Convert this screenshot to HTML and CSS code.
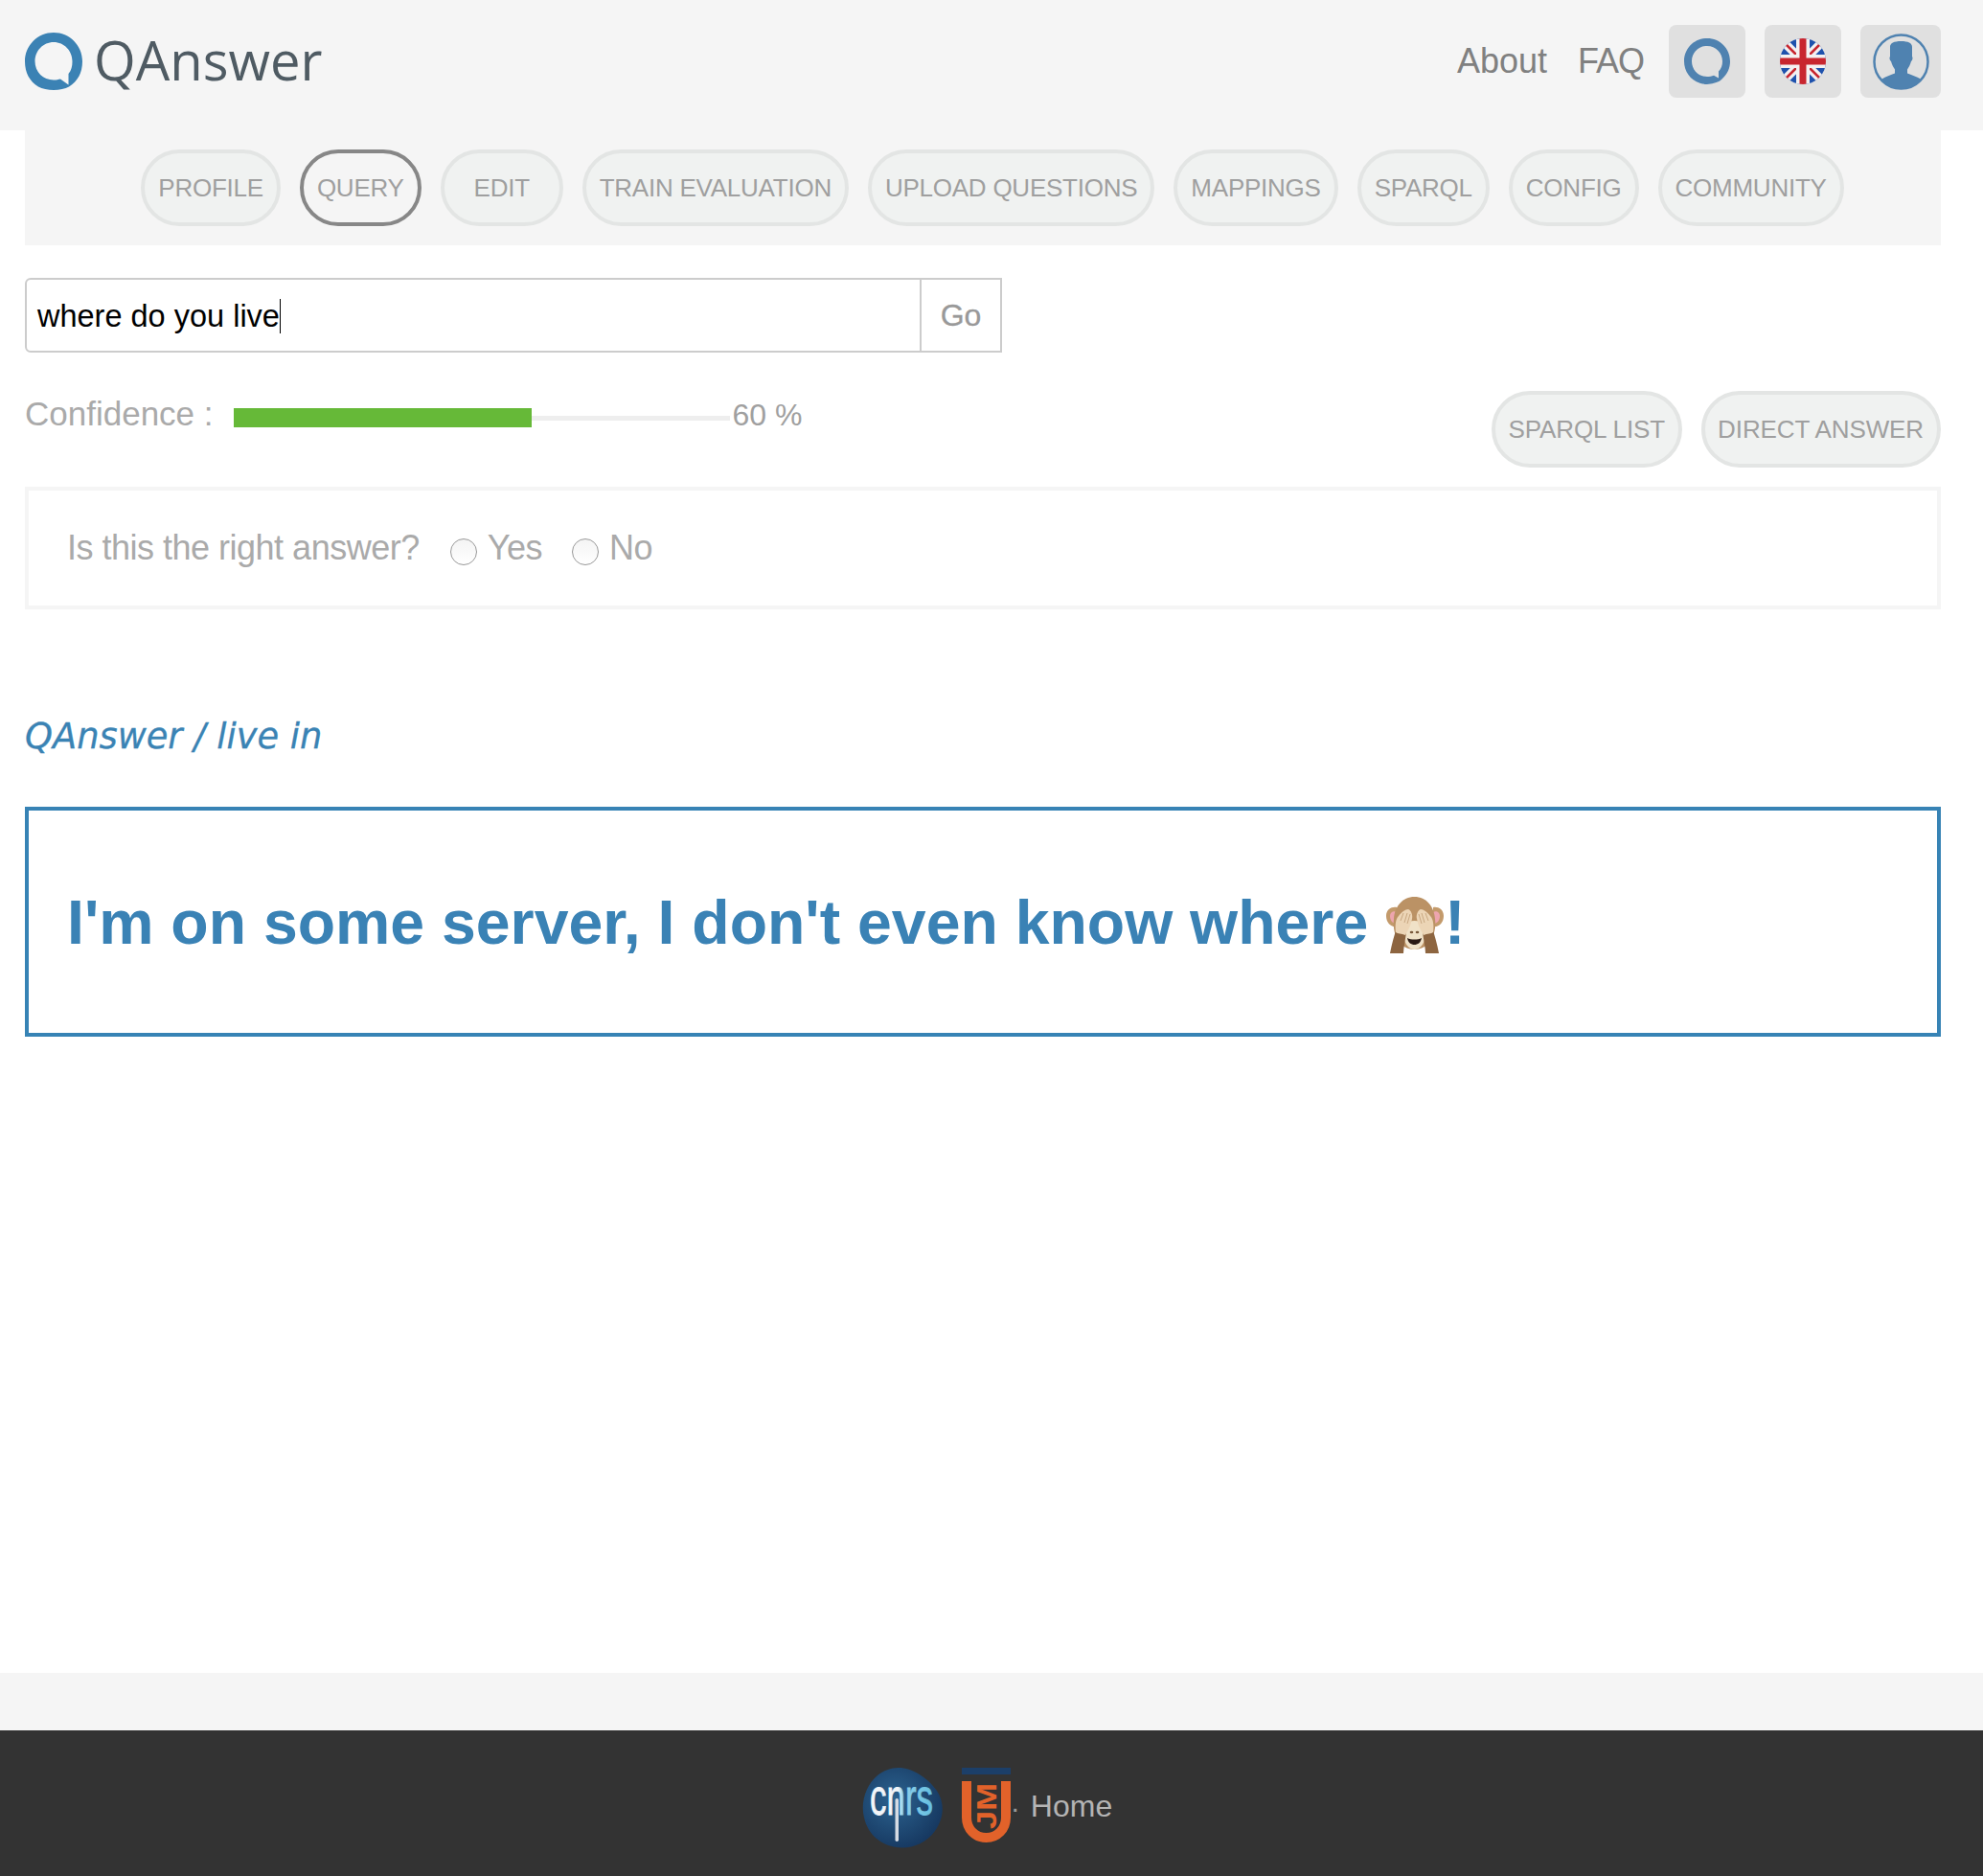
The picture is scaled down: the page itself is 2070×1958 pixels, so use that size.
FILE: index.html
```html
<!DOCTYPE html>
<html lang="en">
<head>
<meta charset="utf-8">
<title>QAnswer</title>
<link rel="stylesheet" href="styles.css">
</head>
<body>
<header class="topbar">
  <a class="brand">
    <svg class="brand-mark" viewBox="0 0 60 60"><path fill="#3b82b4" fill-rule="evenodd" d="M30 0C46.600 0 60 13.400 60 30C60 42 55 51 46 56.500C38 61 22 61 14 56.500C5 51 0 42 0 30C0 13.400 13.400 0 30 0ZM30 10C19 10 10.500 19 10.500 30C10.500 41 19 49.500 30 49.500C33 49.500 35 49 37 48.500L45.500 54.500L45.500 43C48.500 39.500 49.500 35 49.500 30C49.500 19 41 10 30 10Z"/></svg>
    <span class="brand-name">QAnswer</span>
  </a>
  <nav class="toplinks">
    <a class="toplink">About</a>
    <a class="toplink toplink-last">FAQ</a>
    <span class="iconbtn">
      <svg class="icon48" viewBox="0 0 48 48"><path fill="#4f82b0" fill-rule="evenodd" d="M24 0C37.500 0 48 10.500 48 24C48 31 45.500 37 39 43C37 45 33 46.500 31 46.800C27 48.300 21 48.300 16.500 46.800C6.500 43.500 0 34.500 0 24C0 10.500 10.500 0 24 0ZM24 8C15 8 8 15 8 24C8 33 15 40 24 40C26.500 40 29 39.600 31 38.800L36 41.500L36 34.500C38.800 32 40 28 40 24C40 15 33 8 24 8Z"/></svg>
    </span>
    <span class="iconbtn">
      <svg class="icon48" viewBox="0 0 48 48">
        <defs><clipPath id="flagclip"><circle cx="24" cy="24" r="24"/></clipPath></defs>
        <g clip-path="url(#flagclip)">
          <rect width="48" height="48" fill="#1f52ad"/>
          <path d="M0 0L48 48M48 0L0 48" stroke="#f4f1f1" stroke-width="9"/>
          <path d="M5 5L19 19M43 5L29 19M5 43L19 29M43 43L29 29" stroke="#c8262f" stroke-width="2.500"/>
          <rect x="17" width="14" height="48" fill="#f4f1f1"/>
          <rect y="17" width="48" height="14" fill="#f4f1f1"/>
          <rect x="20.500" width="7" height="48" fill="#c8262f"/>
          <rect y="20.500" width="48" height="7" fill="#c8262f"/>
        </g>
      </svg>
    </span>
    <span class="iconbtn iconbtn-wide">
      <svg class="icon59" viewBox="0 0 59 59">
        <circle cx="29.500" cy="29.500" r="28" fill="none" stroke="#4f82b0" stroke-width="2.500"/>
        <path fill="#4f82b0" d="M18 14C18 10 22 8 29.500 8C37 8 41 10 41 14L41 24C42 25 41.500 28 40 29C39 33 37 36 36 37.500L36 41.500C40 43 46 45 50 47.500C45 54 38 58 29.500 58C21 58 13 54 9.500 47.500C13 45 19 43 23 41.500L23 37.500C22 36 20 33 19 29C17.500 28 17 25 18 24Z"/>
      </svg>
    </span>
  </nav>
</header>

<main class="content">
  <nav class="tabs">
    <a class="pill">PROFILE</a>
    <a class="pill pill-active">QUERY</a>
    <a class="pill pill-edit">EDIT</a>
    <a class="pill">TRAIN EVALUATION</a>
    <a class="pill">UPLOAD QUESTIONS</a>
    <a class="pill">MAPPINGS</a>
    <a class="pill">SPARQL</a>
    <a class="pill">CONFIG</a>
    <a class="pill">COMMUNITY</a>
  </nav>

  <form class="search">
    <div class="search-field"><span class="search-text">where do you live</span></div>
    <span class="search-go">Go</span>
  </form>

  <section class="meta">
    <div class="confidence">
      <span class="confidence-label">Confidence :</span>
      <span class="meter"><span class="meter-fill"></span></span>
      <span class="confidence-value">60 %</span>
    </div>
    <div class="meta-actions">
      <a class="pill pill-flat">SPARQL LIST</a>
      <a class="pill pill-flat">DIRECT ANSWER</a>
    </div>
  </section>

  <section class="feedback">
    <span class="feedback-q">Is this the right answer?</span>
    <label class="choice"><input class="radio" type="radio" name="right"><span>Yes</span></label>
    <label class="choice"><input class="radio" type="radio" name="right"><span>No</span></label>
  </section>

  <h2 class="crumb">QAnswer / live in</h2>

  <section class="answer">
    <p class="answer-text">I'm on some server, I don't even know where <svg class="monkey" viewBox="28 24 62 60">
      <path fill="#c39a6b" d="M29 45C29 38 35 35 40 36L40 56C34 57 29 52 29 45ZM89 45C89 38 83 35 78 36L78 56C84 57 89 52 89 45Z"/>
      <path fill="#eda5ae" d="M33 45C33 41 37 39 40 41L40 53C36 53 33 50 33 45ZM85 45C85 41 81 39 78 41L78 53C82 53 85 50 85 45Z"/>
      <path fill="#bb9265" d="M58.500 25C46 25 38 35 37 48C35 66 44 80 58.500 80C73 80 82 66 80 48C79 35 71 25 58.500 25Z"/>
      <path fill="#f0e2c8" d="M58.500 50C50 50 46 58 47 67C49 75 53 80 58.500 80C64 80 68 75 70 67C71 58 67 50 58.500 50Z"/>
      <ellipse cx="55.500" cy="62" rx="1.800" ry="1.300" fill="#7a5a3c"/>
      <ellipse cx="61.500" cy="62" rx="1.800" ry="1.300" fill="#7a5a3c"/>
      <path fill="#2a1a14" d="M51 68C55 70 62 70 66 68C65 73 62 75 58.500 75C55 75 52 73 51 68Z"/>
      <path fill="#8d6540" d="M33 84C35 74 37 66 40 58L50 62C49 70 47 78 47 84ZM84 84C82 74 80 66 77 58L67 62C68 70 70 78 70 84Z"/>
      <path fill="#ecd5b6" d="M39 62C38 54 39 48 42 45C45 41 49 38 52 38C55 39 57 44 56 48C55 54 52 60 49 65C45 63 41 64 39 62Z"/>
      <path fill="#ecd5b6" d="M78 62C79 54 78 48 75 45C72 41 68 38 65 38C62 39 60 44 61 48C62 54 65 60 68 65C72 63 76 64 78 62Z"/>
      <path fill="none" stroke="#c8a882" stroke-width="1" d="M44 50L47 42M48 52L51 42M51 53L54 43M73 50L70 42M69 52L66 42M66 53L63 43"/>
    </svg>!</p>
  </section>
</main>

<div class="footer-strip"></div>
<footer class="footer">
  <svg class="cnrs" viewBox="0 0 84 84">
    <defs>
      <radialGradient id="cnrsbg" cx="40%" cy="40%" r="70%"><stop offset="0" stop-color="#2c6390"/><stop offset="1" stop-color="#14345c"/></radialGradient>
      <linearGradient id="cnrsink" gradientUnits="userSpaceOnUse" x1="0" y1="0" x2="102" y2="0"><stop offset="0.450" stop-color="#f2f5f8"/><stop offset="0.520" stop-color="#8fd0ea"/><stop offset="1" stop-color="#65bfe0"/></linearGradient>
    </defs>
    <path fill="url(#cnrsbg)" d="M38 0C52 0 68 10 78 24C86 36 86 52 76 66C66 80 50 85 36 83C20 81 6 70 2 52C-2 36 4 18 16 8C22 3 30 0 38 0Z"/>
    <text class="cnrs-text" transform="translate(8 49) scale(0.647 1)" fill="url(#cnrsink)" stroke="url(#cnrsink)">cnrs</text>
    <rect x="34.500" y="32" width="3.500" height="45" rx="1.700" fill="#d5dbe3"/>
  </svg>
  <svg class="ujm" viewBox="0 0 51 78">
    <rect width="51" height="7" fill="#1c3f69"/>
    <path fill="none" stroke="#e2622a" stroke-width="10" d="M5 14L5 52C5 64 14 73 25.500 73C37 73 46 64 46 52L46 14"/>
    <text class="ujm-text" x="-64" y="36" transform="rotate(-90)" textLength="48" lengthAdjust="spacingAndGlyphs">JM</text>
  </svg>
  <span class="footer-dot">·</span>
  <a class="footer-link">Home</a>
</footer>
</body>
</html>
```
FILE: styles.css
```css
* { box-sizing: border-box; }
html, body { margin: 0; padding: 0; }
body {
  min-height: 100vh;
  display: flex;
  flex-direction: column;
  font-family: "Liberation Sans", Arial, sans-serif;
  background: #fff;
  color: #999;
}
.topbar {
  height: 136px;
  flex: none;
  background: #f5f5f5;
  display: flex;
  align-items: center;
  justify-content: space-between;
  padding: 0 44px 8px 26px;
}
.brand { display: flex; align-items: center; gap: 12px; }
.brand-mark { width: 60px; height: 60px; display: block; }
.brand-name {
  font-family: "Open Sans", sans-serif;
  font-size: 56.200px;
  line-height: 60px;
  margin-top: -4px;
  color: #4f5b63;
}
.toplinks { display: flex; align-items: center; gap: 20px; }
.toplink { font-size: 36px; color: #808080; margin-right: 12px; }
.toplink-last { margin-right: 6px; letter-spacing: -1px; }
.iconbtn {
  width: 80px;
  height: 76px;
  background: #e0e0e0;
  border-radius: 8px;
  display: flex;
  align-items: center;
  justify-content: center;
}
.iconbtn-wide { width: 84px; }
.icon48 { width: 48px; height: 48px; display: block; }
.icon59 { width: 59px; height: 59px; display: block; }

.content {
  flex: 1;
  padding: 0 44px 0 26px;
}
.tabs {
  height: 120px;
  background: #f5f5f5;
  display: flex;
  align-items: center;
  justify-content: center;
  padding-left: 20px;
  gap: 20px;
}
.pill {
  height: 80px;
  padding: 1px 14px 0;
  border: 4px solid #e3e5e4;
  border-radius: 40px;
  background: #f0f2f1;
  display: flex;
  align-items: center;
  justify-content: center;
  font-size: 26px;
  letter-spacing: -0.240px;
  color: #9f9f9f;
  white-space: nowrap;
}
.pill-active { border-color: #878787; background: #f5f5f5; }
.pill-edit { min-width: 128px; }
.pill-flat { letter-spacing: -0.100px; padding-left: 13px; padding-right: 14px; }

.search {
  display: flex;
  width: 1020px;
  height: 78px;
  margin-top: 34px;
  border: 2px solid #ccc;
  border-radius: 6px 0 0 6px;
  background: #fff;
}
.search-field {
  flex: 1;
  display: flex;
  align-items: center;
  padding: 2px 0 0 11px;
}
.search-text {
  font-size: 32.500px;
  line-height: 36px;
  color: #000;
  border-right: 1.500px solid #000;
}
.search-go {
  width: 84px;
  border-left: 2px solid #ccc;
  display: flex;
  align-items: center;
  justify-content: center;
  font-size: 32px;
  color: #999;
  -webkit-text-stroke: 0.300px #999;
}

.meta {
  display: flex;
  justify-content: space-between;
  height: 80px;
  margin-top: 40px;
}
.confidence { display: flex; align-items: center; height: 48px; }
.confidence-label { font-size: 35px; color: #aaa; }
.meter {
  width: 518px;
  height: 5px;
  margin: 8px 0 0 21px;
  background: #eee;
  position: relative;
}
.meter-fill {
  position: absolute;
  left: 0;
  top: -8px;
  width: 311px;
  height: 20px;
  background: #66b938;
}
.confidence-value { font-size: 32px; color: #a0a0a0; margin: 2px 0 0 3px; }
.meta-actions { display: flex; gap: 20px; }

.feedback {
  height: 128px;
  margin-top: 20px;
  border: 4px solid #f5f5f5;
  padding-left: 40px;
  display: flex;
  align-items: center;
  font-size: 36px;
  letter-spacing: -0.500px;
  color: #aaa;
}
.feedback-q { margin-right: 32px; }
.choice { display: flex; align-items: center; gap: 11px; margin-right: 31px; }
.radio {
  appearance: none;
  width: 28px;
  height: 28px;
  margin: 8px 0 0;
  border: 1px solid #999;
  border-radius: 50%;
  background: linear-gradient(#f4f4f4, #fff);
}

.crumb {
  margin: 109px 0 0;
  font-family: "DejaVu Sans", sans-serif;
  font-size: 36.800px;
  line-height: 48px;
  font-style: italic;
  font-weight: 400;
  color: #3a83b4;
  -webkit-text-stroke: 0.300px #3a83b4;
}
.answer {
  height: 240px;
  margin-top: 49px;
  border: 4px solid #3783b5;
  padding: 2px 0 0 40px;
  display: flex;
  align-items: center;
}
.answer-text {
  margin: 0;
  font-size: 64.400px;
  font-weight: 700;
  color: #3a82b5;
  white-space: nowrap;
}
.monkey {
  width: 62px;
  height: 60px;
  vertical-align: -10px;
}

.footer-strip { height: 60px; flex: none; background: #f5f5f5; }
.footer {
  height: 152px;
  flex: none;
  background: #333;
  display: flex;
  align-items: center;
  justify-content: center;
  padding: 10px 7px 0 0;
}
.cnrs { width: 84px; height: 84px; display: block; margin: 0 20px 0 -2px; }
.cnrs-text {
  font-family: "Liberation Sans", sans-serif;
  font-size: 54px;
  stroke-width: 0.800px;
}
.ujm { width: 51px; height: 78px; display: block; margin-bottom: 6px; }
.ujm-text {
  font-family: "Liberation Sans", sans-serif;
  font-size: 30px;
  font-weight: 700;
  fill: #e2622a;
}
.footer-dot { font-size: 30px; color: #999; margin-right: 11px; }
.footer-link { font-size: 32px; color: #b4b4b4; margin-bottom: 4px; }
```
